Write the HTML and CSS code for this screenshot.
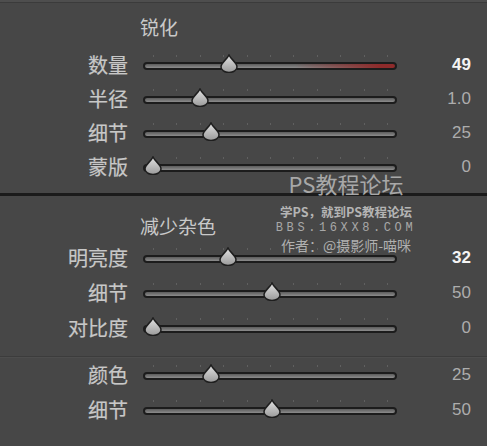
FILE: index.html
```html
<!DOCTYPE html>
<html lang="zh-CN">
<head>
  <meta charset="UTF-8" />
  <title>锐化 / 减少杂色</title>
  <meta name="viewport" content="width=device-width, initial-scale=1" />
  <link rel="stylesheet" href="styles.css">
</head>
<body>
  <svg class="defs" width="0" height="0" aria-hidden="true">
    <defs>
      <linearGradient id="thumb-fill" x1="0" y1="0" x2="0" y2="1">
        <stop offset="0" stop-color="#e2e2e2"/>
        <stop offset="1" stop-color="#9a9a9a"/>
      </linearGradient>
    </defs>
  </svg>
  <div class="panel">
    <section class="group">
      <h3 class="group-title">锐化</h3>
      <div class="row">
        <span class="label">数量</span>
        <div class="slider">
          <div class="track red"></div>
          <svg class="thumb" style="left: 86px" viewBox="0 0 18 19"><path d="M9 1 C11 5.5 17 8.5 17 13 A8 5.5 0 0 1 1 13 C1 8.5 7 5.5 9 1 Z"/></svg>
        </div>
        <span class="value hi">49</span>
      </div>
      <div class="row">
        <span class="label">半径</span>
        <div class="slider">
          <div class="track"></div>
          <svg class="thumb" style="left: 57px" viewBox="0 0 18 19"><path d="M9 1 C11 5.5 17 8.5 17 13 A8 5.5 0 0 1 1 13 C1 8.5 7 5.5 9 1 Z"/></svg>
        </div>
        <span class="value">1.0</span>
      </div>
      <div class="row">
        <span class="label">细节</span>
        <div class="slider">
          <div class="track"></div>
          <svg class="thumb" style="left: 68px" viewBox="0 0 18 19"><path d="M9 1 C11 5.5 17 8.5 17 13 A8 5.5 0 0 1 1 13 C1 8.5 7 5.5 9 1 Z"/></svg>
        </div>
        <span class="value">25</span>
      </div>
      <div class="row">
        <span class="label">蒙版</span>
        <div class="slider">
          <div class="track"></div>
          <svg class="thumb" style="left: 10px" viewBox="0 0 18 19"><path d="M9 1 C11 5.5 17 8.5 17 13 A8 5.5 0 0 1 1 13 C1 8.5 7 5.5 9 1 Z"/></svg>
        </div>
        <span class="value">0</span>
      </div>
    </section>

    <hr class="divider">

    <section class="group second">
      <h3 class="group-title">减少杂色</h3>
      <div class="row tall">
        <span class="label">明亮度</span>
        <div class="slider">
          <div class="track"></div>
          <svg class="thumb" style="left: 85px" viewBox="0 0 18 19"><path d="M9 1 C11 5.5 17 8.5 17 13 A8 5.5 0 0 1 1 13 C1 8.5 7 5.5 9 1 Z"/></svg>
        </div>
        <span class="value hi">32</span>
      </div>
      <div class="row tall">
        <span class="label">细节</span>
        <div class="slider">
          <div class="track"></div>
          <svg class="thumb" style="left: 129px" viewBox="0 0 18 19"><path d="M9 1 C11 5.5 17 8.5 17 13 A8 5.5 0 0 1 1 13 C1 8.5 7 5.5 9 1 Z"/></svg>
        </div>
        <span class="value">50</span>
      </div>
      <div class="row tall">
        <span class="label">对比度</span>
        <div class="slider">
          <div class="track"></div>
          <svg class="thumb" style="left: 10px" viewBox="0 0 18 19"><path d="M9 1 C11 5.5 17 8.5 17 13 A8 5.5 0 0 1 1 13 C1 8.5 7 5.5 9 1 Z"/></svg>
        </div>
        <span class="value">0</span>
      </div>

      <hr class="thin">

      <div class="row tall">
        <span class="label">颜色</span>
        <div class="slider">
          <div class="track"></div>
          <svg class="thumb" style="left: 68px" viewBox="0 0 18 19"><path d="M9 1 C11 5.5 17 8.5 17 13 A8 5.5 0 0 1 1 13 C1 8.5 7 5.5 9 1 Z"/></svg>
        </div>
        <span class="value">25</span>
      </div>
      <div class="row tall">
        <span class="label">细节</span>
        <div class="slider">
          <div class="track"></div>
          <svg class="thumb" style="left: 129px" viewBox="0 0 18 19"><path d="M9 1 C11 5.5 17 8.5 17 13 A8 5.5 0 0 1 1 13 C1 8.5 7 5.5 9 1 Z"/></svg>
        </div>
        <span class="value">50</span>
      </div>
    </section>

    <!-- watermark -->
    <div class="watermark">
      <div class="wm-title">PS教程论坛</div>
      <div class="wm-line">学PS，就到PS教程论坛</div>
      <div class="wm-url">BBS.16XX8.COM</div>
      <div class="wm-author">作者：@摄影师-喵咪</div>
    </div>
  </div>
</body>
</html>
```

FILE: styles.css
```css
body {
  margin: 0;
  background: #474747;
  font-family: "Noto Sans CJK SC", "Liberation Sans", sans-serif;
  color: #c6c6c6;
}
.defs {
  position: absolute;
}
.panel {
  position: relative;
  width: 487px;
  height: 446px;
  box-sizing: border-box;
  border-top: 2px solid #4e4e4e;
  overflow: hidden;
}
.panel::before {
  content: "";
  display: block;
  height: 1px;
  background: #3b3b3b;
}
.group-title {
  margin: 12px 0 9px 140px;
  height: 24px;
  line-height: 24px;
  font-size: 19px;
  font-weight: 400;
  color: #c9c9c9;
}
.second .group-title {
  margin-top: 18px;
  margin-bottom: 2px;
}
.row {
  display: grid;
  grid-template-columns: 128px 254px 74px;
  column-gap: 15px;
  height: 34px;
  align-items: center;
}
.row.tall {
  height: 35px;
}
.label {
  text-align: right;
  font-size: 20px;
  line-height: 24px;
  color: #c8c8c8;
  -webkit-text-stroke: 0.2px #c8c8c8;
}
.slider {
  position: relative;
  height: 34px;
}
.slider::before {
  content: "";
  position: absolute;
  left: 10px;
  width: 235px;
  top: 7px;
  height: 2px;
  background: repeating-linear-gradient(to right, #606060 0 1px, transparent 1px 23.4px);
}
.track {
  position: absolute;
  left: 0;
  right: 0;
  top: 14px;
  height: 4px;
  border: 2px solid #1c1c1c;
  border-radius: 5px;
  background: linear-gradient(#5c5c5c, #8c8c8c);
}
.track.red {
  background: linear-gradient(to right, transparent 60%, #8e2b2b 94%), linear-gradient(#5c5c5c, #8c8c8c);
}
.thumb {
  position: absolute;
  top: 6px;
  width: 18px;
  height: 19px;
  margin-left: -9px;
  fill: url(#thumb-fill);
  stroke: #1e1e1e;
  stroke-width: 1.5;
}
.value {
  text-align: right;
  padding-right: 15px;
  font-family: "Liberation Sans", sans-serif;
  font-size: 17px;
  color: #adadad;
}
.value.hi {
  color: #f4f4f4;
  font-weight: 700;
}
.divider {
  margin: 9px 0 0;
  height: 3px;
  border: none;
  background: #1b1b1b;
}
.thin {
  margin: 11px 0 0;
  height: 1px;
  border: none;
  background: #3c3c3c;
  box-shadow: 0 1px 0 #4d4d4d;
}
.watermark {
  position: absolute;
  left: 266px;
  top: 167px;
  width: 160px;
  text-align: center;
  color: #a4a4a4;
  pointer-events: none;
}
.wm-title {
  font-size: 22px;
  line-height: 28px;
  color: #a8a8a8;
}
.wm-line {
  margin-top: 7px;
  font-size: 12.5px;
  line-height: 16px;
  font-weight: 700;
  color: #b4b4b4;
}
.wm-url {
  font-family: "Liberation Mono", monospace;
  font-size: 12px;
  letter-spacing: 3.6px;
  line-height: 16px;
  color: #a8a8a8;
}
.wm-author {
  font-size: 14px;
  line-height: 18px;
  color: #b0b0b0;
}
```
